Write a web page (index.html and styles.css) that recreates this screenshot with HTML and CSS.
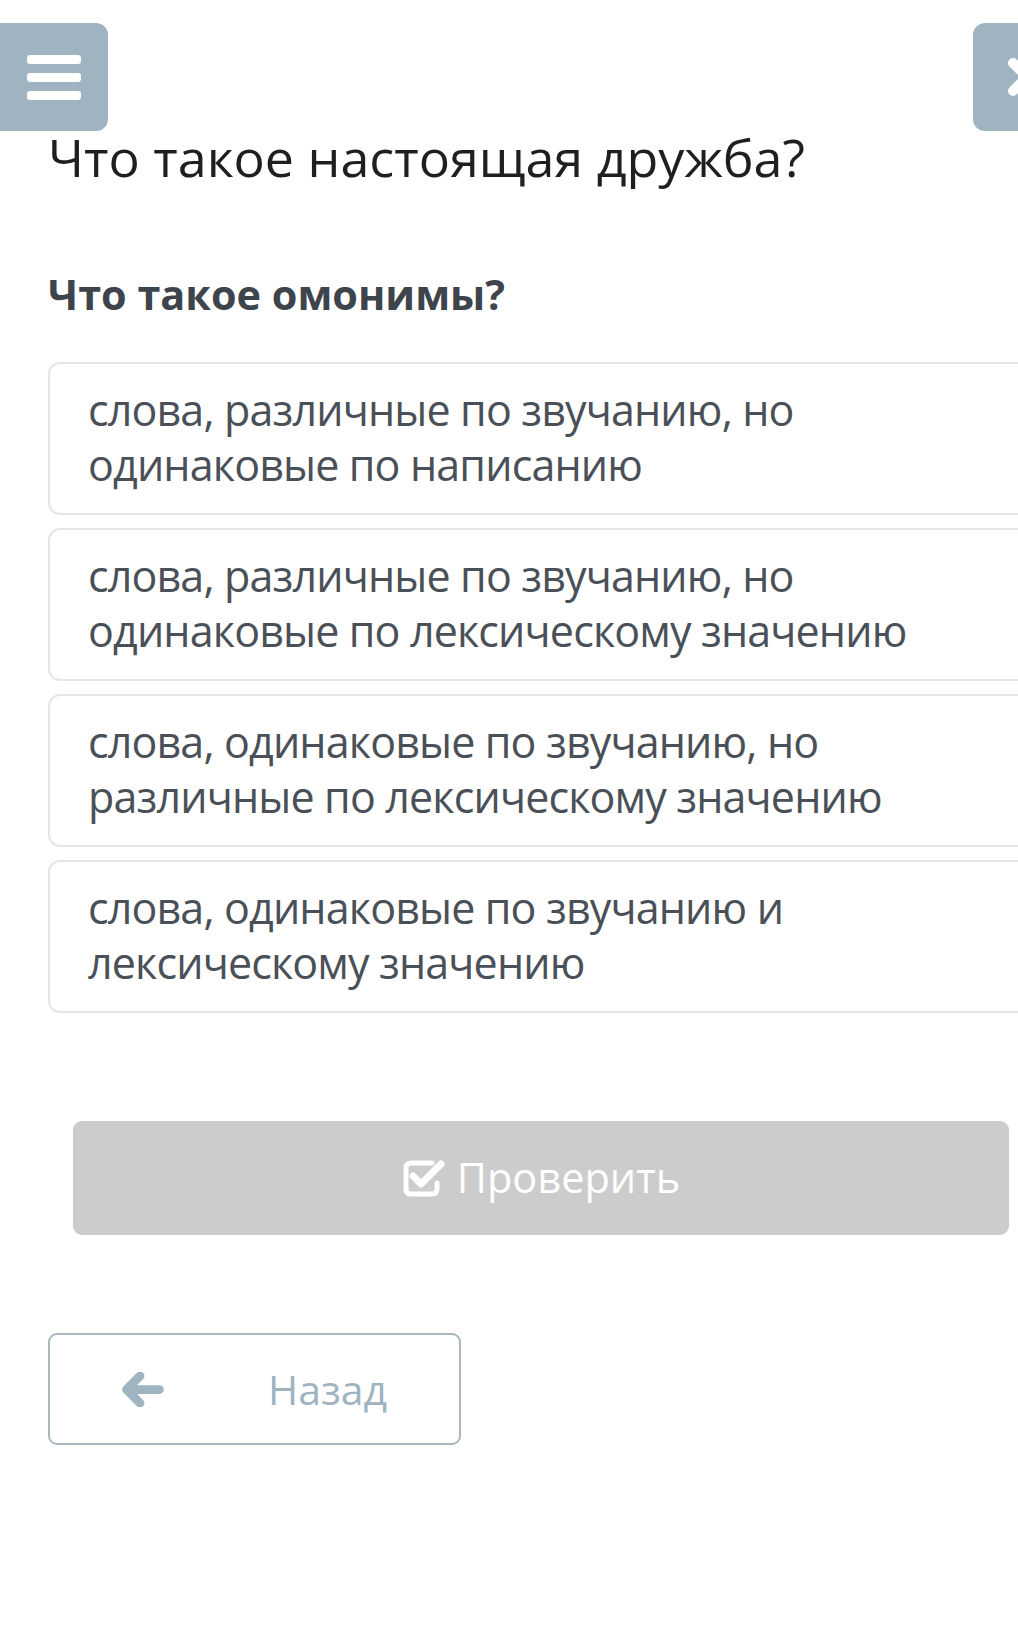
FILE: index.html
```html
<!DOCTYPE html>
<html lang="ru">
<head>
<meta charset="utf-8">
<title>Что такое омонимы?</title>
<link rel="stylesheet" href="styles.css">
</head>
<body>
<button class="menu-btn" aria-label="Меню">
  <span class="bar"></span><span class="bar"></span><span class="bar"></span>
</button>
<button class="close-btn" aria-label="Закрыть">
  <svg class="close-icon" viewBox="0 0 44 44" width="44" height="44"><path d="M8 8 L36 36 M36 8 L8 36" stroke="#fff" stroke-width="10" stroke-linecap="round"/></svg>
</button>
<main class="page">
  <h1 class="topic">Что такое настоящая дружба?</h1>
  <h2 class="question">Что такое омонимы?</h2>
  <div class="options">
    <div class="option"><span class="option-text">слова, различные по звучанию, но одинаковые по написанию</span></div>
    <div class="option"><span class="option-text">слова, различные по звучанию, но одинаковые по лексическому значению</span></div>
    <div class="option"><span class="option-text">слова, одинаковые по звучанию, но различные по лексическому значению</span></div>
    <div class="option"><span class="option-text">слова, одинаковые по звучанию и лексическому значению</span></div>
  </div>
  <div class="check-row">
    <button class="check-btn">
      <svg class="check-icon" viewBox="0 0 44 40" width="44" height="40"><path d="M30 5 H9 Q4 5 4 10 V31 Q4 36 9 36 H30 Q35 36 35 31 V25" fill="none" stroke="#fff" stroke-width="5" stroke-linecap="round"/><path d="M11 18 L19 26 L39 6" fill="none" stroke="#fff" stroke-width="7" stroke-linecap="round" stroke-linejoin="round"/></svg>
      <span>Проверить</span>
    </button>
  </div>
  <button class="back-btn">
    <svg class="arrow-icon" viewBox="0 0 44 36" width="44" height="35"><path d="M20 4 L6 18 L20 32 M7 18 H40" fill="none" stroke="#a0b3c1" stroke-width="9" stroke-linecap="round" stroke-linejoin="round"/></svg>
    <span class="back-text">Назад</span>
  </button>
</main>
</body>
</html>
```

FILE: styles.css
```css
html, body {
  margin: 0;
  padding: 0;
  background: #ffffff;
  overflow-x: hidden;
}

body {
  font-family: "Open Sans", "Noto Sans", "DejaVu Sans", sans-serif;
  width: 1018px;
  min-height: 1635px;
  position: relative;
}

button {
  font-family: inherit;
  cursor: pointer;
}

.menu-btn {
  position: absolute;
  left: 0;
  top: 23px;
  width: 108px;
  height: 108px;
  border: none;
  border-radius: 0 12px 12px 0;
  background: #a0b3c1;
  display: flex;
  flex-direction: column;
  align-items: center;
  justify-content: center;
  gap: 9px;
  padding: 0;
}

.menu-btn .bar {
  display: block;
  width: 54px;
  height: 9px;
  border-radius: 3px;
  background: #ffffff;
}

.close-btn {
  position: absolute;
  left: 973px;
  top: 23px;
  width: 108px;
  height: 108px;
  border: none;
  border-radius: 12px;
  background: #a0b3c1;
  display: flex;
  align-items: center;
  justify-content: center;
  padding: 0;
}

.page {
  padding: 126px 0 0 48px;
}

.topic {
  margin: 0;
  font-size: 52px;
  font-weight: 400;
  line-height: 62px;
  color: #1d1f21;
}

.question {
  margin: 80px 0 0 0;
  font-size: 41.4px;
  font-weight: 700;
  line-height: 52px;
  color: #3e444b;
}

.options {
  margin-top: 42px;
  display: flex;
  flex-direction: column;
  gap: 13px;
}

.option {
  width: 1000px;
  box-sizing: border-box;
  height: 153px;
  border: 2px solid #e3e6e9;
  border-radius: 12px;
  padding: 18px 38px 0 38px;
  color: #4a5057;
  font-size: 43px;
  letter-spacing: -0.85px;
  line-height: 55px;
}

.option-text {
  display: block;
  max-width: 860px;
}

.check-row {
  margin-top: 108px;
  padding-left: 25px;
}

.check-btn {
  width: 936px;
  height: 114px;
  border: none;
  border-radius: 9px;
  background: #cccccc;
  color: #ffffff;
  font-size: 41.5px;
  display: flex;
  align-items: center;
  justify-content: center;
  gap: 11px;
  padding: 0;
}

.check-btn span {
  line-height: 1;
}

.back-btn {
  margin-top: 98px;
  width: 413px;
  height: 112px;
  box-sizing: border-box;
  border: 2px solid #a9b7c1;
  border-radius: 9px;
  background: #ffffff;
  display: flex;
  align-items: center;
  padding: 0 0 0 70px;
  gap: 104px;
}

.back-text {
  font-size: 41px;
  color: #a0b3c1;
  line-height: 1;
}
```
